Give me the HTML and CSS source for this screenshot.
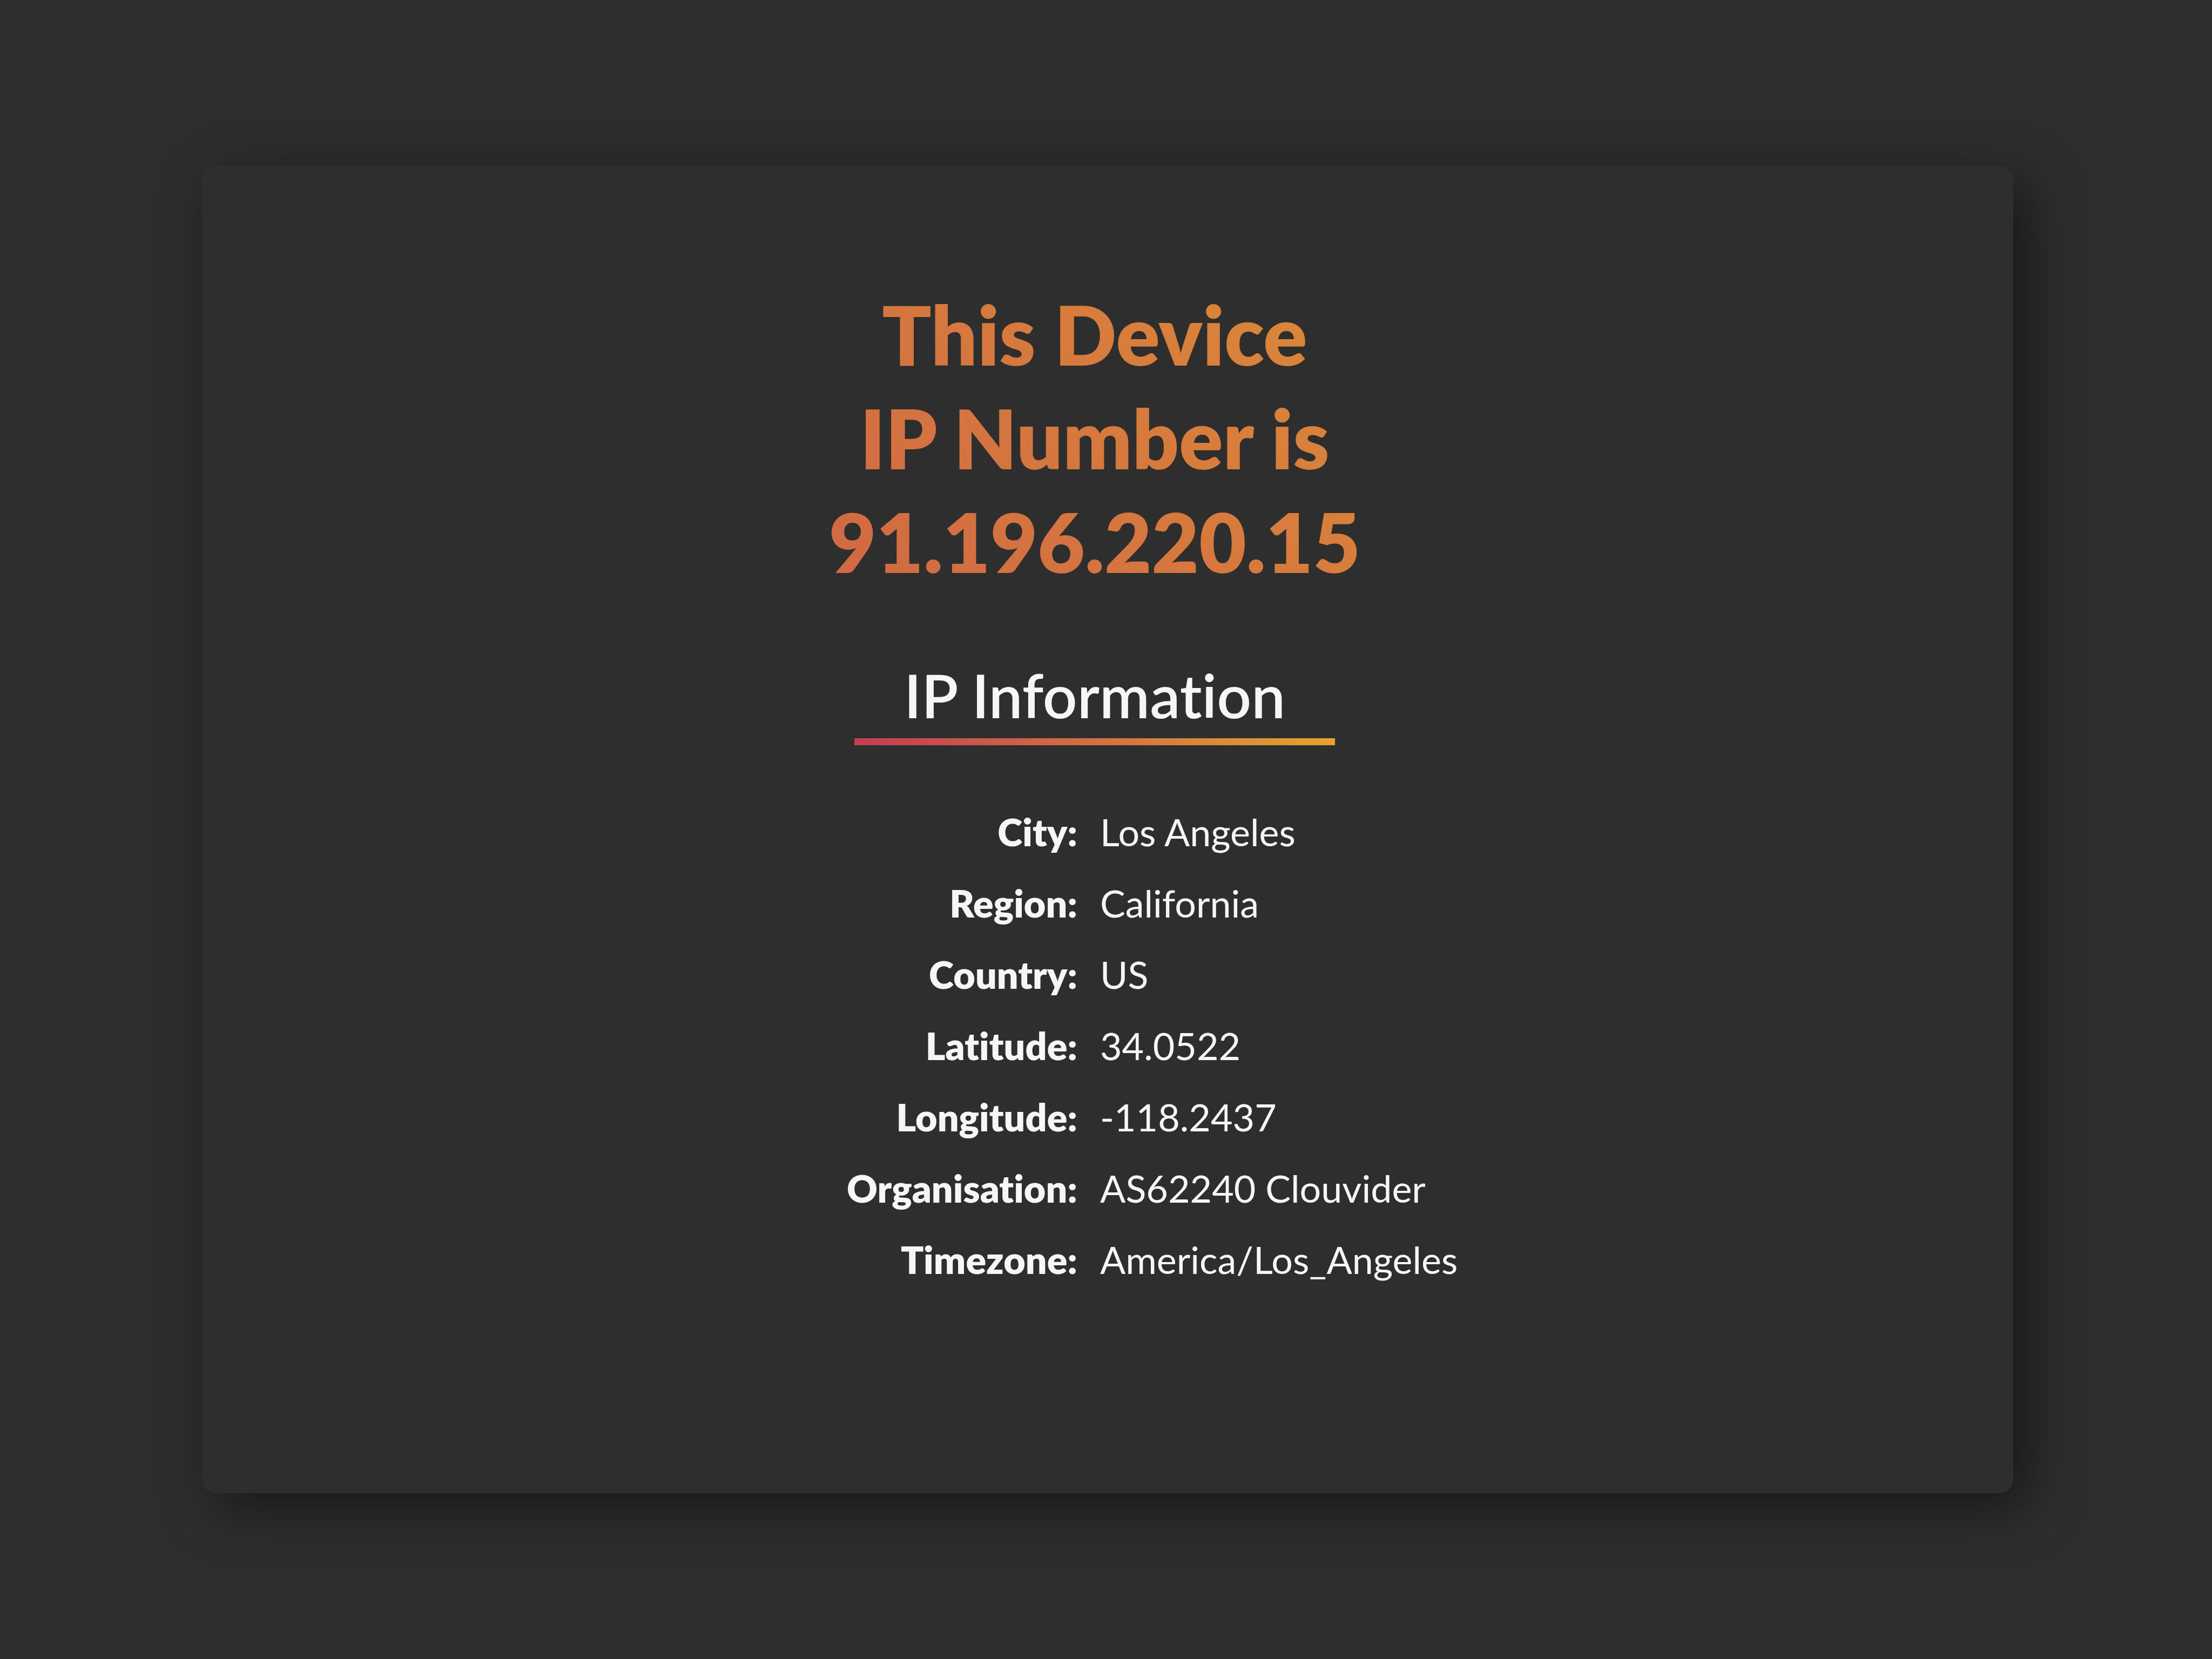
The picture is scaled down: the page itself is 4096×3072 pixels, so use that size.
FILE: index.html
```html
<!DOCTYPE html>
<html lang="en">
<head>
  <meta charset="utf-8">
  <title>IP Information</title>
  <link rel="stylesheet" href="styles.css">
</head>
<body>
  <main class="card">
    <h1 class="title">This Device<br>IP Number is<br>91.196.220.15</h1>
    <h2 class="subtitle">IP Information</h2>
    <dl class="details">
      <dt class="label">City:</dt><dd class="value">Los Angeles</dd>
      <dt class="label">Region:</dt><dd class="value">California</dd>
      <dt class="label">Country:</dt><dd class="value">US</dd>
      <dt class="label">Latitude:</dt><dd class="value">34.0522</dd>
      <dt class="label">Longitude:</dt><dd class="value">-118.2437</dd>
      <dt class="label">Organisation:</dt><dd class="value">AS62240 Clouvider</dd>
      <dt class="label">Timezone:</dt><dd class="value">America/Los_Angeles</dd>
    </dl>
  </main>
</body>
</html>
```
FILE: styles.css
```css
:root {
  --accent: linear-gradient(45deg, #c33c54, #e4a42e);
}

* {
  box-sizing: border-box;
  margin: 0;
  padding: 0;
}

body {
  min-height: 100vh;
  display: flex;
  padding: 10vh 368px 10vh 374px;
  background: #2e2e2c;
  color: #f5f7f6;
  font-family: Lato, "Open Sans", sans-serif;
  font-variant-ligatures: none;
}

.card {
  flex: 1;
  display: flex;
  flex-direction: column;
  align-items: center;
  padding: 216px 48px 216px 0;
  border-radius: 26px;
  background: #2e2e2e;
  box-shadow: 26px 26px 102px rgba(0, 0, 0, 0.5);
}

.title {
  width: 100%;
  background: linear-gradient(45deg, #c33c54 -24%, #e4a42e 103%);
  background-clip: text;
  -webkit-background-clip: text;
  color: transparent;
  font-size: 151px;
  font-weight: 800;
  line-height: 192px;
  text-align: center;
}

.subtitle {
  margin-top: 108px;
  padding: 0 92px 13px;
  background: var(--accent) bottom / 100% 13px no-repeat;
  font-size: 112px;
  font-weight: 600;
  line-height: 160px;
}

.details {
  width: 100%;
  display: grid;
  grid-template-columns: 1fr 1fr;
  column-gap: 42px;
  margin-top: 94px;
  padding-right: 22px;
  font-size: 70px;
  line-height: 132px;
}

.label {
  font-weight: 800;
  text-align: right;
}

.value {
  font-weight: 400;
}
```
